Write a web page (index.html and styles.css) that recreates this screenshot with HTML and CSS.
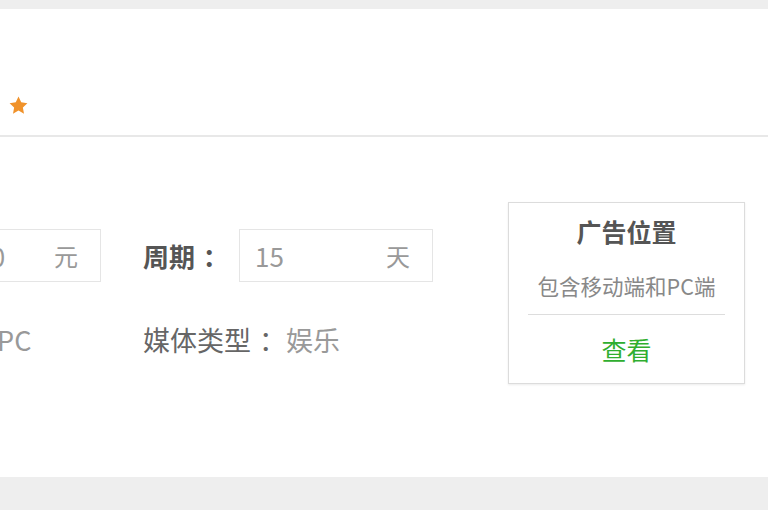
FILE: index.html
```html
<!DOCTYPE html>
<html lang="zh-CN">
<head>
    <meta charset="UTF-8">
    <title>广告详情</title>
    <meta name="viewport" content="width=device-width, initial-scale=1.0">
    <link rel="stylesheet" href="styles.css">
</head>
<body>

    <div class="card">
        <div class="card-head">
            <div class="stars">
                <svg class="star" viewBox="0 0 24 24"><path d="M12 1.8l3.1 6.6 7.1.9-5.2 4.9 1.3 7.1L12 17.8l-6.3 3.5 1.3-7.1-5.2-4.9 7.1-.9z"/></svg>
                <svg class="star" viewBox="0 0 24 24"><path d="M12 1.8l3.1 6.6 7.1.9-5.2 4.9 1.3 7.1L12 17.8l-6.3 3.5 1.3-7.1-5.2-4.9 7.1-.9z"/></svg>
                <svg class="star" viewBox="0 0 24 24"><path d="M12 1.8l3.1 6.6 7.1.9-5.2 4.9 1.3 7.1L12 17.8l-6.3 3.5 1.3-7.1-5.2-4.9 7.1-.9z"/></svg>
            </div>
        </div>

        <div class="card-body">
            <div class="fields">
                <div class="field">
                    <span class="label">价格<span class="colon">：</span></span>
                    <div class="box box-price">
                        <span class="num">10000</span>
                        <span class="unit">元</span>
                    </div>
                </div>
                <div class="field">
                    <span class="label">周期<span class="colon">：</span></span>
                    <div class="box">
                        <span class="num">15</span>
                        <span class="unit">天</span>
                    </div>
                </div>
                <div class="info info-end">平台<span class="colon">：</span>移动端和PC</div>
                <div class="info">媒体类型<span class="colon">：</span><span class="val">娱乐</span></div>
            </div>

            <div class="position">
                <div class="pos-title">广告位置</div>
                <div class="pos-desc">包含移动端和PC端</div>
                <div class="pos-line"></div>
                <a class="pos-link" href="#">查看</a>
            </div>
        </div>
    </div>

</body>
</html>
```

FILE: styles.css
```css
body {
    margin: 0;
    background-color: #eeeeee;
    font-family: "Noto Sans CJK SC", "Noto Sans", sans-serif;
    overflow: hidden;
}

.card {
    margin-top: 9px;
    height: 468px;
    background-color: white;
    overflow: hidden;
}

.card-head {
    height: 107px;
    padding-bottom: 19px;
    border-bottom: 2px solid #e8e8e8;
    display: flex;
    align-items: flex-end;
}

.stars {
    display: flex;
    gap: 30px;
    margin-left: -94px;
}

.star {
    width: 21px;
    height: 21px;
    fill: #f0922b;
}

.card-body {
    display: flex;
    align-items: flex-start;
}

.fields {
    flex: none;
    width: 687px;
    margin-left: -179px;
    padding-top: 92px;
    display: grid;
    grid-template-columns: 322px auto;
    row-gap: 38px;
    font-size: 26px;
}

.colon {
    padding-left: 0.3em;
}

.field {
    display: flex;
    align-items: center;
}

.label {
    width: 78px;
    margin-right: 18px;
    font-weight: bold;
    color: #555;
    white-space: nowrap;
}

.box {
    width: 194px;
    height: 53px;
    border: 1px solid #e5e5e5;
    box-sizing: border-box;
    display: flex;
    align-items: center;
    justify-content: space-between;
    padding: 0 22px 0 15px;
    color: #999;
}

.box-price {
    width: 184px;
}

.unit {
    font-size: 24px;
}

.info {
    height: 40px;
    line-height: 40px;
    font-size: 27px;
    color: #666;
    white-space: nowrap;
}

.info-end {
    margin-left: -21px;
    color: #999;
}

.info .val {
    color: #999;
}

.position {
    flex: none;
    width: 237px;
    margin-top: 65px;
    border: 1px solid #dcdcdc;
    box-shadow: 0 1px 2px rgba(0,0,0,0.08);
    box-sizing: border-box;
    padding: 13px 19px 19px;
    text-align: center;
}

.pos-title {
    font-size: 25px;
    line-height: 30px;
    font-weight: bold;
    color: #555;
}

.pos-desc {
    margin-top: 25px;
    font-size: 21.5px;
    line-height: 30px;
    color: #888;
    white-space: nowrap;
}

.pos-line {
    margin-top: 13px;
    border-top: 1px solid #dddddd;
}

.pos-link {
    display: block;
    margin-top: 19px;
    font-size: 25px;
    line-height: 30px;
    color: #2fae2f;
    text-decoration: none;
}
```
